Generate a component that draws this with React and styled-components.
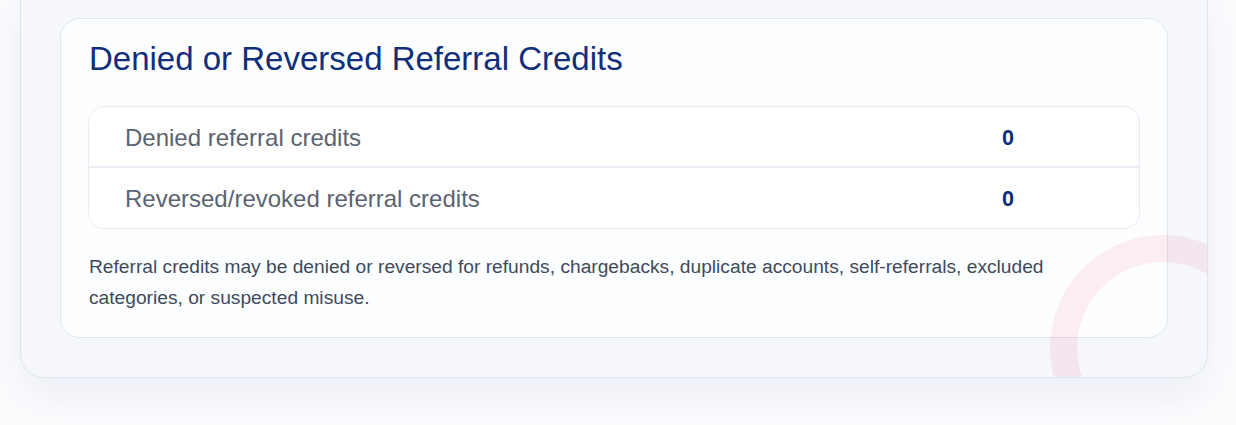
import React from 'react';
import styled, { createGlobalStyle } from 'styled-components';

const GlobalStyle = createGlobalStyle`
  html, body {
    margin: 0;
    padding: 0;
    background: #fbfcfe;
    font-family: "Liberation Sans", Arial, sans-serif;
    overflow: hidden;
  }
`;

const Page = styled.div`
  padding: 0 28px 48px 20px;
`;

const Panel = styled.section`
  position: relative;
  overflow: hidden;
  margin-top: -22px;
  padding: 39px;
  background: #f5f7fc;
  border: 1px solid #dde4f0;
  border-radius: 24px;
  box-shadow: 0 18px 40px rgba(30, 50, 100, 0.07);
`;

const Ring = styled.div`
  position: absolute;
  left: 1029px;
  top: 256px;
  width: 226px;
  height: 226px;
  box-sizing: border-box;
  border-radius: 50%;
  border: 27px solid rgba(226, 40, 90, 0.08);
  pointer-events: none;
`;

const Card = styled.div`
  background: #fdfeff;
  border: 1px solid #dfe5ef;
  border-radius: 20px;
  padding: 22px 27px 24px 27px;
`;

const Title = styled.h2`
  margin: 0 0 29px 1px;
  font-size: 33px;
  line-height: 36px;
  font-weight: 400;
  color: #0f2f7c;
`;

const Table = styled.div`
  background: #ffffff;
  border: 1px solid #e8ecf2;
  border-radius: 16px;
  overflow: hidden;
`;

const Row = styled.div`
  display: grid;
  grid-template-columns: 1fr 262px;
  align-items: center;
  height: ${(p) => (p.$last ? '60px' : '61px')};
  padding-top: 2px;
  border-bottom: ${(p) => (p.$last ? 'none' : '2px solid #e9edf3')};
  box-sizing: border-box;
`;

const Label = styled.span`
  padding-left: 36px;
  font-size: 24px;
  color: #5b6371;
`;

const Value = styled.span`
  text-align: center;
  font-size: 21.6px;
  font-weight: 700;
  color: #0e2d7c;
`;

const Note = styled.p`
  margin: 22px 0 0 1px;
  font-size: 19.2px;
  line-height: 31px;
  color: #3e4a5d;
  max-width: 1000px;
`;

const rows = [
  { label: 'Denied referral credits', value: 0 },
  { label: 'Reversed/revoked referral credits', value: 0 },
];

export default function App() {
  return (
    <Page>
      <GlobalStyle />
      <Panel>
        <Card>
          <Title>Denied or Reversed Referral Credits</Title>
          <Table>
            {rows.map((r, i) => (
              <Row key={r.label} $last={i === rows.length - 1}>
                <Label>{r.label}</Label>
                <Value>{r.value}</Value>
              </Row>
            ))}
          </Table>
          <Note>
            Referral credits may be denied or reversed for refunds, chargebacks, duplicate accounts,
            self-referrals, excluded categories, or suspected misuse.
          </Note>
        </Card>
        <Ring />
      </Panel>
    </Page>
  );
}
